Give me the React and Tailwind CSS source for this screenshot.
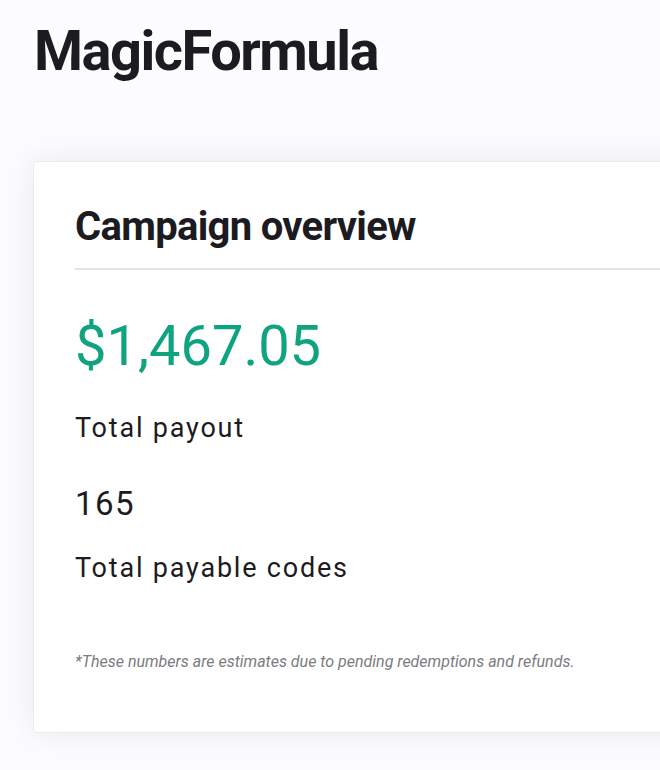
import React from "react";

const stats = [
  { value: "$1,467.05", label: "Total payout", highlight: true },
  { value: "165", label: "Total payable codes" },
];

const App = () => {
  return (
    <div className="min-h-screen w-full overflow-hidden bg-[#fcfbfd] font-['Roboto',sans-serif] text-[#1c1b1f]">
      <div className="pl-[34px] pt-[19px]">
        <h1 className="text-[56px] font-bold leading-[64px] tracking-[-1.5px]">
          MagicFormula
        </h1>
      </div>

      {/* overview card */}
      <div className="ml-[33px] mt-[78px] w-[700px] rounded-tl-[4px] rounded-bl-[4px] border border-[#ececef] bg-white pl-[41px] pt-[42px] pb-[60px] shadow-[0_0_32px_rgba(40,20,70,0.08)]">
        <h2 className="text-[40px] font-bold leading-[46px] tracking-[-0.7px]">
          Campaign overview
        </h2>
        <div className="mt-[18px] h-[2px] bg-[#e4e4e6]" />

        <div className="mt-[44px] text-[56px] leading-[64px] text-[#0fa37f]">
          {stats[0].value}
        </div>
        <p className="mt-[33px] text-[27px] leading-[34px] tracking-[1.8px]">
          {stats[0].label}
        </p>

        <div className="mt-[39px] text-[33px] leading-[40px] tracking-[1.5px]">
          {stats[1].value}
        </div>
        <p className="mt-[27px] text-[27px] leading-[34px] tracking-[1.8px]">
          {stats[1].label}
        </p>

        <p className="mt-[67px] text-[16px] italic leading-[20px] text-[#7c7b80]">
          *These numbers are estimates due to pending redemptions and refunds.
        </p>
      </div>
    </div>
  );
};

export default App;
